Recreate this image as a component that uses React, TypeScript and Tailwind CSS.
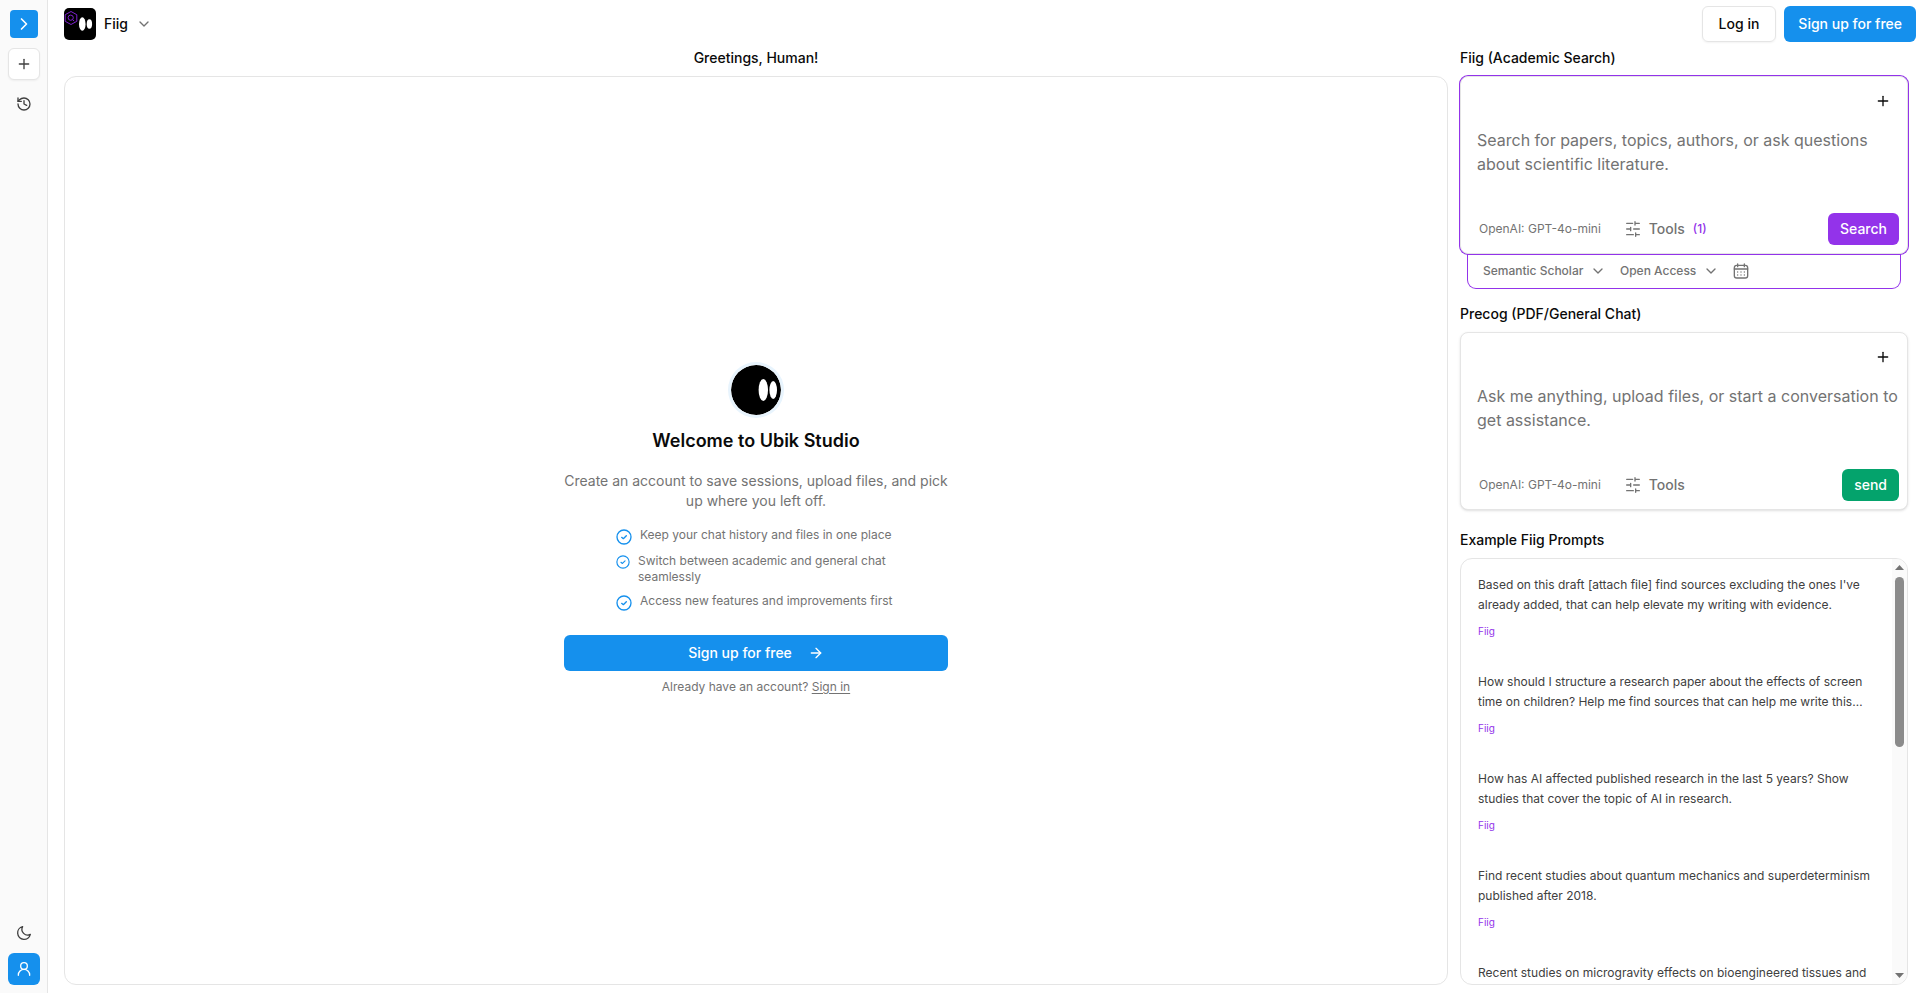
import type { ReactNode } from "react";
import { ArrowRight, ChevronDown, ChevronRight, History, Plus } from "lucide-react";

const BENEFITS = [
  { text: "Keep your chat history and files in one place", icon: "size-4" },
  { text: "Switch between academic and general chat seamlessly", icon: "size-3.5" },
  { text: "Access new features and improvements first", icon: "size-4" },
];

const PROMPTS = [
  "Based on this draft [attach file] find sources excluding the ones I've already added, that can help elevate my writing with evidence.",
  "How should I structure a research paper about the effects of screen time on children? Help me find sources that can help me write this…",
  "How has AI affected published research in the last 5 years? Show studies that cover the topic of AI in research.",
  "Find recent studies about quantum mechanics and superdeterminism published after 2018.",
  "Recent studies on microgravity effects on bioengineered tissues and",
];

function Icon({ className, children }: { className?: string; children: ReactNode }) {
  return (
    <svg
      viewBox="0 0 24 24"
      fill="none"
      stroke="currentColor"
      strokeWidth={2}
      strokeLinecap="round"
      strokeLinejoin="round"
      aria-hidden="true"
      className={className}
    >
      {children}
    </svg>
  );
}

function MoonIcon() {
  return (
    <Icon className="size-4">
      <path d="M21.5 14.08a8.56 8.56 0 0 1-11.58-11.58A9.63 9.63 0 1 0 21.5 14.08Z" />
    </Icon>
  );
}

function UserIcon() {
  return (
    <Icon className="size-4">
      <circle cx="12" cy="7.5" r="5" />
      <path d="M3.5 21.5v-.5a8.5 8.5 0 0 1 17 0v.5" />
    </Icon>
  );
}

function ToolsIcon() {
  return (
    <Icon className="size-4">
      <path d="M2.5 3.5h9M15 1v5M15 3.5h6.5" />
      <path d="M2.5 12h5M8.5 9.5v5M13 12h8.5" />
      <path d="M2.5 20.5h10M16 18v5M17 20.5h4.5" />
    </Icon>
  );
}

function CalendarIcon() {
  return (
    <Icon className="size-4">
      <path d="M7 1.5v4M17 1.5v4M2 9h20" />
      <rect x="2" y="3.5" width="20" height="19" rx="3.5" />
      <path d="M7 13.5h.01M12 13.5h.01M17 13.5h.01M7 18h.01M12 18h.01M17 18h.01" />
    </Icon>
  );
}

function CheckIcon({ className }: { className: string }) {
  return (
    <Icon className={`mt-0.5 shrink-0 text-[#1590ed] ${className}`}>
      <circle cx="12" cy="12" r="10.5" />
      <path d="M8.5 12.5l2.5 2 4.5-4.5" />
    </Icon>
  );
}

function FiigLogo() {
  return (
    <svg viewBox="0 0 32 32" className="size-8" aria-hidden="true">
      <rect width="32" height="32" rx="5" />
      <g fill="none" stroke="#7e22ce" strokeWidth="1" strokeLinejoin="round">
        <path d="M7 3.5l5.8 3.2v6.6L7 16.5l-5.8-3.2V6.7z" />
        <circle cx="6.7" cy="9.7" r="2.6" />
        <path d="M8.6 11.6l1.6 1.6" />
      </g>
      <ellipse cx="18.3" cy="16" rx="3.3" ry="6.8" fill="#fff" />
      <ellipse cx="25.4" cy="16" rx="2.7" ry="4.8" fill="#fff" />
    </svg>
  );
}

function UbikLogo() {
  return (
    <svg viewBox="0 0 50 50" className="size-[50px] rounded-full ring-3 ring-[#e8f4fd]" aria-hidden="true">
      <circle cx="25" cy="25" r="25" />
      <ellipse cx="32.3" cy="25" rx="4.7" ry="11" fill="#fff" />
      <ellipse cx="42.2" cy="25" rx="3.8" ry="9" fill="#fff" />
    </svg>
  );
}

function Picker({ label, value, className }: { label: string; value: string; className: string }) {
  return (
    <div className={`flex items-center font-medium ${className}`}>
      <select aria-label={label} className="h-6 appearance-none bg-transparent outline-none">
        <option>{value}</option>
      </select>
      <ChevronDown className="pointer-events-none size-4 text-neutral-500" strokeWidth={2} />
    </div>
  );
}

type ComposerProps = {
  id: string;
  label: string;
  placeholder: string;
  submit: string;
  submitClass: string;
  boxClass: string;
  toolCount?: number;
};

function Composer({ id, label, placeholder, submit, submitClass, boxClass, toolCount }: ComposerProps) {
  return (
    <>
      <label htmlFor={id} className="mb-2 block text-sm font-medium">
        {label}
      </label>
      <form
        onSubmit={(e) => e.preventDefault()}
        className={`relative rounded-lg border border-neutral-200 bg-white ${boxClass}`}
      >
        <div className="flex justify-end px-2 pt-2">
          <button type="button" aria-label="Add attachment" className="flex size-8 items-center justify-center">
            <Plus className="size-4" strokeWidth={2} />
          </button>
        </div>
        <textarea
          id={id}
          placeholder={placeholder}
          className="block h-24 w-full resize-none pt-[11px] pr-1 pl-4 text-base outline-none placeholder:text-neutral-500"
        />
        <div className="flex h-10 items-center pr-2 pb-2 pl-[18px] text-neutral-500">
          <button type="button" className="text-xs">
            OpenAI: GPT-4o-mini
          </button>
          <button type="button" className="ml-6 flex items-center gap-2 text-sm font-medium">
            <ToolsIcon />
            Tools
            {toolCount && <span className="text-xs text-[#9333ea]">({toolCount})</span>}
          </button>
          <button type="submit" className={`ml-auto h-8 rounded-md px-3 text-sm font-medium text-white ${submitClass}`}>
            {submit}
          </button>
        </div>
      </form>
    </>
  );
}

function Sidebar() {
  return (
    <nav className="flex w-12 shrink-0 flex-col items-center border-r border-neutral-200 bg-neutral-50 py-2 text-neutral-700">
      <button aria-label="Open sidebar" className="my-0.5 flex size-7 items-center justify-center rounded-sm bg-[#1590ed] text-white">
        <ChevronRight className="size-5" strokeWidth={2} />
      </button>
      <button
        aria-label="New session"
        className="mt-2 flex size-8 items-center justify-center rounded-md border border-neutral-200 bg-white shadow-xs"
      >
        <Plus className="size-4" strokeWidth={2} />
      </button>
      <button aria-label="History" className="mt-2 flex size-8 items-center justify-center">
        <History className="size-4" strokeWidth={2} />
      </button>
      <button aria-label="Toggle theme" className="mt-auto flex size-8 items-center justify-center">
        <MoonIcon />
      </button>
      <button aria-label="Account" className="mt-1 flex size-8 items-center justify-center rounded-md bg-[#1590ed] text-white">
        <UserIcon />
      </button>
    </nav>
  );
}

function Welcome() {
  return (
    <div className="flex w-96 flex-col items-center text-neutral-500">
      <UbikLogo />
      <h2 className="mt-3 text-lg font-semibold text-neutral-950">Welcome to Ubik Studio</h2>
      <p className="mt-4 text-center text-sm">
        Create an account to save sessions, upload files, and pick up where you left off.
      </p>
      <ul className="mt-4 w-70 space-y-2 text-xs">
        {BENEFITS.map((b) => (
          <li key={b.text} className="flex items-start gap-2">
            <CheckIcon className={b.icon} />
            {b.text}
          </li>
        ))}
      </ul>
      <button className="mt-6 flex h-9 w-full items-center justify-center gap-4 rounded-md bg-[#1590ed] text-sm font-medium text-white">
        Sign up for free
        <ArrowRight className="size-4" strokeWidth={2} />
      </button>
      <p className="mt-2 mb-0.5 text-xs">
        Already have an account?{" "}
        <a href="#signin" className="underline underline-offset-2">
          Sign in
        </a>
      </p>
    </div>
  );
}

function ExamplePrompts() {
  return (
    <section className="mt-5 flex min-h-0 flex-1 flex-col">
      <h2 className="mb-2 text-sm font-medium">Example Fiig Prompts</h2>
      <div className="flex min-h-0 flex-1 overflow-hidden rounded-xl border border-neutral-200">
        <ul className="flex-1 space-y-[35px] overflow-y-auto px-[17px] pt-4 [scrollbar-width:none]">
          {PROMPTS.map((prompt) => (
            <li key={prompt}>
              <button className="block w-full text-left">
                <span className="block text-xs/5 text-neutral-700">{prompt}</span>
                <span className="mt-2.5 block text-[10px]/3 text-[#9333ea]">Fiig</span>
              </button>
            </li>
          ))}
        </ul>
        <div className="flex w-[15px] flex-col items-center bg-neutral-50 py-1.5" aria-hidden="true">
          <svg viewBox="0 0 9 5" className="h-[5px] w-[9px] fill-neutral-500">
            <path d="M0 5L4.5 0L9 5z" />
          </svg>
          <div className="mt-[7px] h-[170px] w-[9px] rounded-full bg-[#8b8b8b]" />
          <svg viewBox="0 0 9 5" className="mt-auto h-[5px] w-[9px] fill-neutral-500">
            <path d="M0 0L4.5 5L9 0z" />
          </svg>
        </div>
      </div>
    </section>
  );
}

export default function App() {
  return (
    <div className="flex h-screen bg-white font-['Inter','Liberation_Sans',sans-serif] text-neutral-950">
      <Sidebar />
      <div className="flex min-w-0 flex-1 flex-col">
        <header className="flex h-12 shrink-0 items-center pr-1 pl-4">
          <FiigLogo />
          <Picker label="Assistant" value="Fiig" className="ml-2 gap-2 text-sm" />
          <button className="ml-auto h-9 rounded-md border border-neutral-200 px-4 text-sm font-medium shadow-xs">
            Log in
          </button>
          <button className="ml-2 h-9 rounded-md bg-[#1590ed] px-3.5 text-sm font-medium text-white">
            Sign up for free
          </button>
        </header>

        <div className="flex min-h-0 flex-1 gap-3 pr-3 pb-2 pl-4">
          <main className="flex min-w-0 flex-1 flex-col">
            <h1 className="mb-2 text-center text-sm font-medium">Greetings, Human!</h1>
            <div className="flex flex-1 items-center justify-center rounded-xl border border-neutral-200">
              <Welcome />
            </div>
          </main>

          <aside className="flex w-md shrink-0 flex-col">
            <section>
              <Composer
                id="fiig"
                label="Fiig (Academic Search)"
                placeholder="Search for papers, topics, authors, or ask questions about scientific literature."
                submit="Search"
                submitClass="bg-[#9333ea]"
                boxClass="ring-1 ring-[#9333ea]"
                toolCount={1}
              />
              <div className="mx-2 flex h-[34px] items-center gap-3.5 rounded-b-lg px-[15px] text-neutral-500 ring-1 ring-[#9333ea]">
                <Picker label="Source" value="Semantic Scholar" className="gap-1.5 text-xs" />
                <Picker label="Access" value="Open Access" className="gap-1.5 text-xs" />
                <button type="button" aria-label="Date range">
                  <CalendarIcon />
                </button>
              </div>
            </section>
            <section className="mt-4">
              <Composer
                id="precog"
                label="Precog (PDF/General Chat)"
                placeholder="Ask me anything, upload files, or start a conversation to get assistance."
                submit="send"
                submitClass="bg-[#04a36c]"
                boxClass="shadow-sm"
              />
            </section>
            <ExamplePrompts />
          </aside>
        </div>
      </div>
    </div>
  );
}
